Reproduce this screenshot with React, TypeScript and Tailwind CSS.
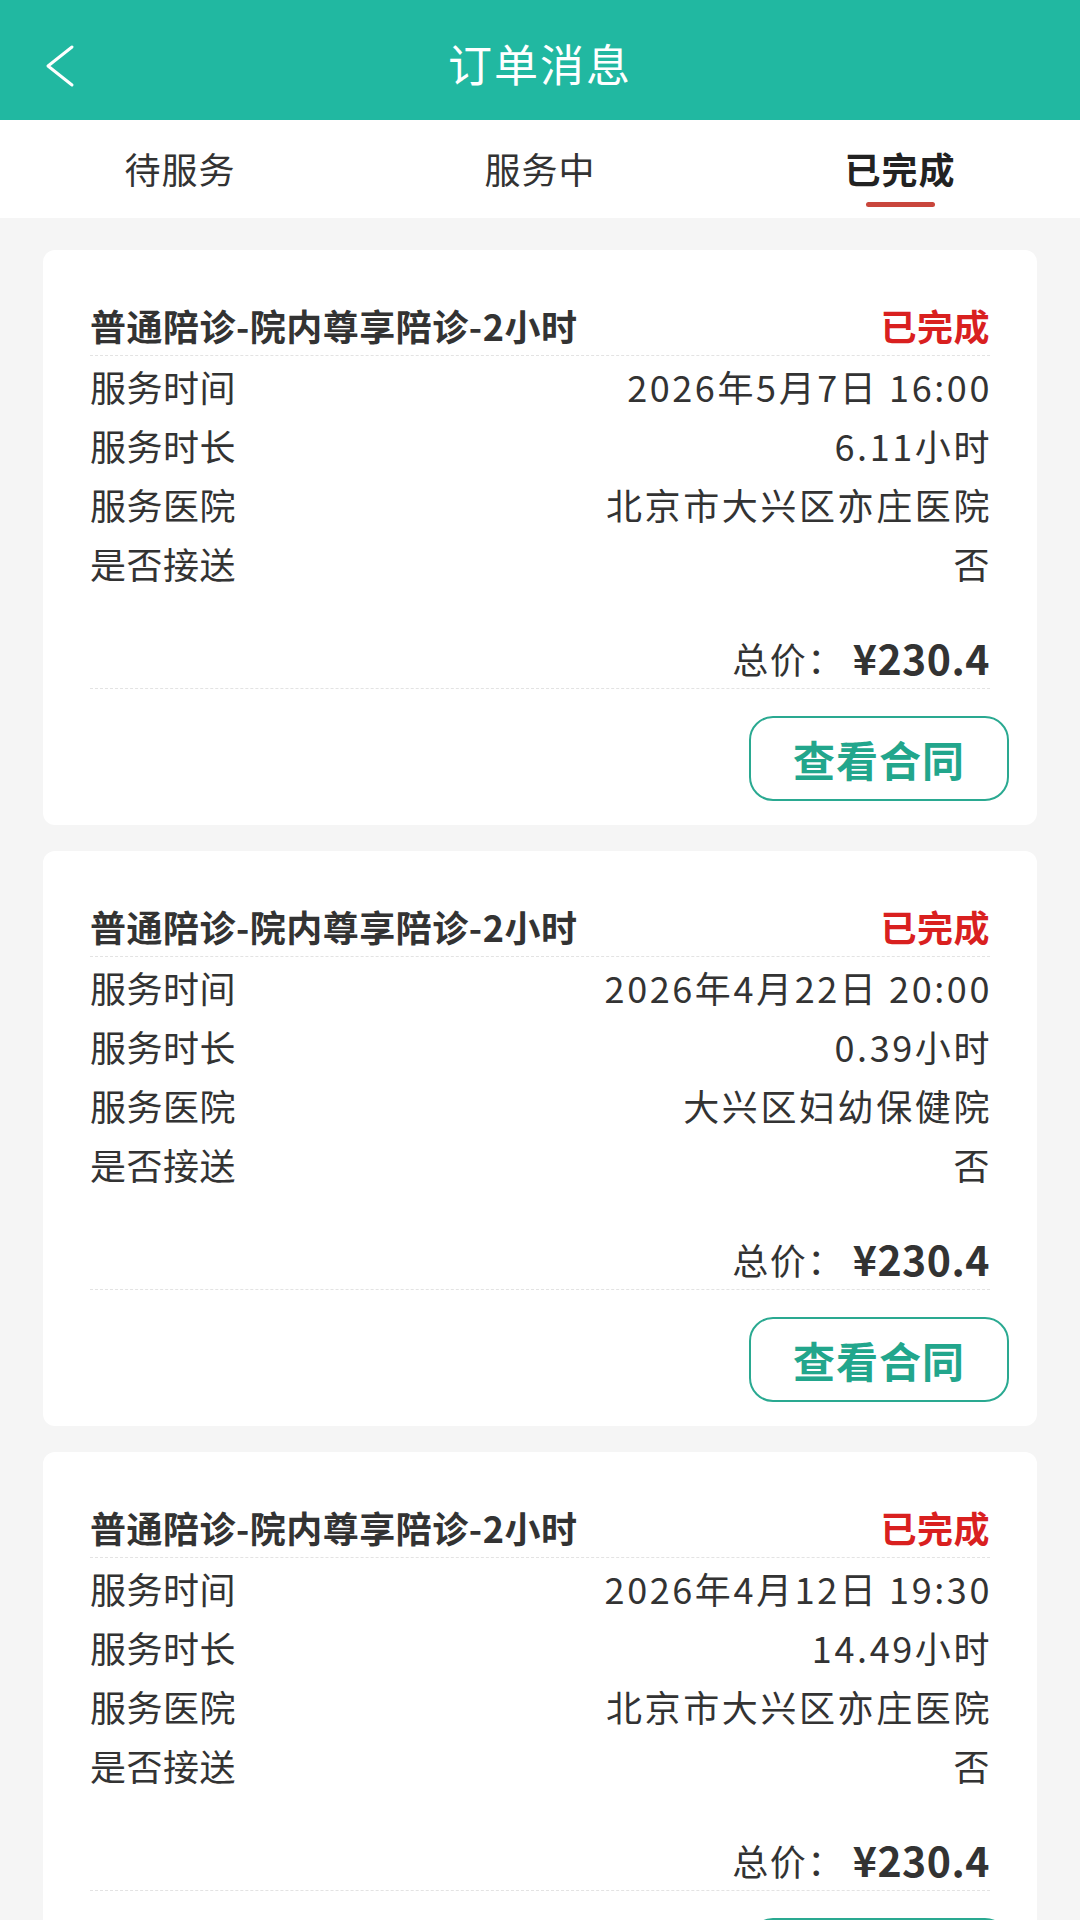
import type React from "react";

type Order = {
  id: number;
  time: string;
  duration: string;
  hospital: string;
  pickup: string;
  price: string;
};

const orders: Order[] = [
  { id: 1, time: "2026年5月7日 16:00", duration: "6.11小时", hospital: "北京市大兴区亦庄医院", pickup: "否", price: "¥230.4" },
  { id: 2, time: "2026年4月22日 20:00", duration: "0.39小时", hospital: "大兴区妇幼保健院", pickup: "否", price: "¥230.4" },
  { id: 3, time: "2026年4月12日 19:30", duration: "14.49小时", hospital: "北京市大兴区亦庄医院", pickup: "否", price: "¥230.4" },
];

const tabs = ["待服务", "服务中", "已完成"];

const Row: React.FC<{ label: string; value: string }> = ({ label, value }) => (
  <div className="flex h-[59px] items-center justify-between px-[47px] text-[36px] leading-none text-[#333]">
    <span className="tracking-[0.5px]">{label}</span>
    <span className="tracking-[2.6px] -mr-[2px]">{value}</span>
  </div>
);

const OrderCard: React.FC<{ order: Order }> = ({ order }) => (
  <div className="rounded-[12px] bg-white pb-[24px]">
    <div className="px-[47px] pt-[44px]">
      <div className="flex h-[62px] items-center justify-between border-b border-dashed border-[#e3e3e3] text-[36px] font-bold leading-none tracking-[0.5px]">
        <span className="text-[#333]">普通陪诊-院内尊享陪诊-2小时</span>
        <span className="text-[#d9201f]">已完成</span>
      </div>
    </div>
    <Row label="服务时间" value={order.time} />
    <Row label="服务时长" value={order.duration} />
    <Row label="服务医院" value={order.hospital} />
    <Row label="是否接送" value={order.pickup} />
    <div className="mt-[35px] px-[47px]">
      <div className="flex h-[62px] items-center justify-end border-b border-dashed border-[#e3e3e3] text-[#333]">
        <span className="text-[36px] leading-none tracking-[1.5px]">总价：</span>
        <span className="ml-[8px] text-[41px] font-bold leading-none tracking-[0.5px]">{order.price}</span>
      </div>
    </div>
    <div className="mt-[27px] flex justify-end pr-[28px]">
      <button className="flex h-[85px] w-[260px] items-center justify-center rounded-[24px] border-2 border-[#2aa991] text-[42px] font-semibold tracking-[1px] text-[#22a68c]">
        查看合同
      </button>
    </div>
  </div>
);

export default function App() {
  return (
    <div
      className="min-h-[1920px] w-[1080px] bg-[#f5f5f5]"
      style={{ fontFamily: '"Noto Sans CJK SC", "Noto Sans", sans-serif' }}
    >
      <header className="grid h-[120px] grid-cols-[120px_1fr_120px] items-center bg-[#21b8a1] text-white">
        <div className="mt-[12px] flex items-center pl-[44px]">
          <svg width="32" height="44" viewBox="0 0 32 44" fill="none">
            <path d="M28 3 L4 22 L28 41" stroke="white" strokeWidth="3" strokeLinecap="round" strokeLinejoin="round" />
          </svg>
        </div>
        <h1 className="pt-[6px] text-center text-[44px] font-normal leading-none tracking-[2px]">订单消息</h1>
        <div />
      </header>

      <nav className="grid h-[98px] grid-cols-3 bg-white">
        {tabs.map((tab, i) => {
          const active = i === 2;
          return (
            <div key={tab} className="flex flex-col items-center pt-[28px]">
              <span
                className={
                  active
                    ? "text-[36px] font-bold leading-[40px] tracking-[1px] text-[#222]"
                    : "text-[36px] leading-[40px] tracking-[1px] text-[#333]"
                }
              >
                {tab}
              </span>
              {active && <div className="mt-[14px] h-[5px] w-[69px] rounded-full bg-[#c9463c]" />}
            </div>
          );
        })}
      </nav>

      <main className="flex flex-col gap-[26px] px-[43px] pt-[32px]">
        {orders.map((order) => (
          <OrderCard key={order.id} order={order} />
        ))}
      </main>
    </div>
  );
}
